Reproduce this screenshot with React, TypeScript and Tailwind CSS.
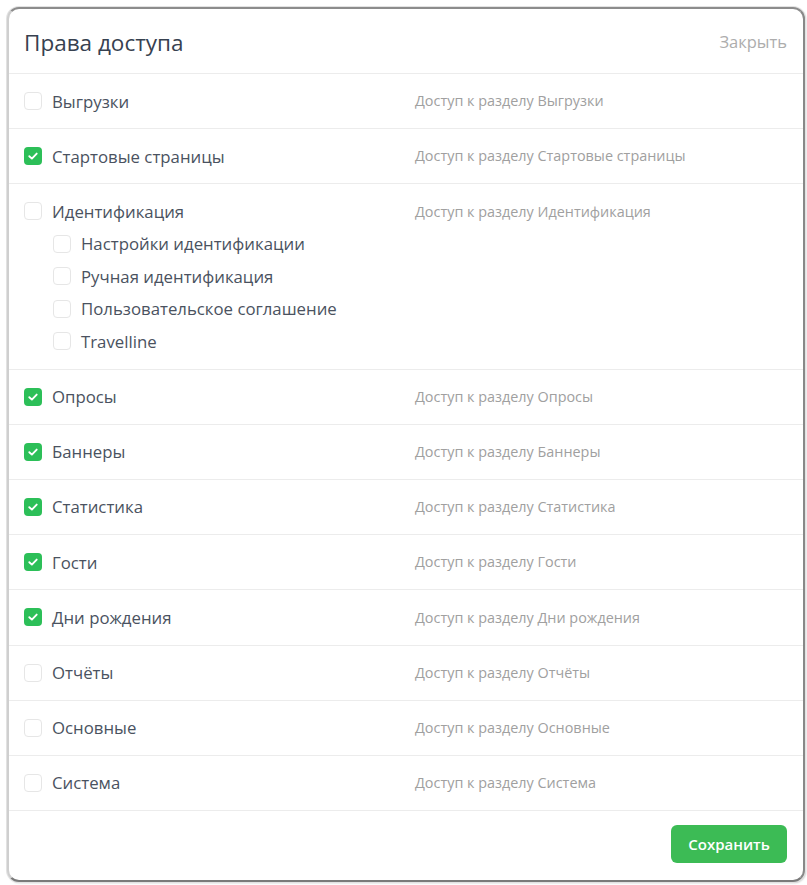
import React from "react";

type Item = { label: string; checked: boolean; children?: string[] };

const items: Item[] = [
  { label: "Выгрузки", checked: false },
  { label: "Стартовые страницы", checked: true },
  {
    label: "Идентификация",
    checked: false,
    children: [
      "Настройки идентификации",
      "Ручная идентификация",
      "Пользовательское соглашение",
      "Travelline",
    ],
  },
  { label: "Опросы", checked: true },
  { label: "Баннеры", checked: true },
  { label: "Статистика", checked: true },
  { label: "Гости", checked: true },
  { label: "Дни рождения", checked: true },
  { label: "Отчёты", checked: false },
  { label: "Основные", checked: false },
  { label: "Система", checked: false },
];

function Box({ checked }: { checked: boolean }) {
  if (checked) {
    return (
      <span className="flex h-[18px] w-[18px] shrink-0 items-center justify-center rounded-[4px] bg-[#2cbf58]">
        <svg width="12" height="12" viewBox="0 0 12 12" fill="none">
          <path d="M2.3 6.2 L4.9 8.6 L9.7 3.6" stroke="white" strokeWidth="1.9" strokeLinecap="round" strokeLinejoin="round" />
        </svg>
      </span>
    );
  }
  return <span className="h-[18px] w-[18px] shrink-0 rounded-[4px] border border-[#e6e6e6] bg-white" />;
}

export default function App() {
  return (
    <div className="h-[885px] w-[807px] bg-white p-[7px] pr-[2px] pb-[3px]" style={{ fontFamily: '"Open Sans", "Noto Sans", sans-serif' }}>
      <div className="flex h-full w-full flex-col overflow-hidden rounded-[12px] border-2 border-t-[#8c8c8c] border-r-[#888] border-b-[#7a7a7a] border-l-[#cfcfcf] bg-white shadow-[0_0_0_1px_#e2e2e2,1px_1px_2px_rgba(0,0,0,0.25)]">
        <div className="flex h-[65px] shrink-0 items-center justify-between border-b border-[#ececec] pl-[15px] pr-[16px] pt-[3px]">
          <span className="text-[22.5px] font-medium text-[#374150]">Права доступа</span>
          <span className="text-[16.5px] text-[#adadad]">Закрыть</span>
        </div>
        {items.map((it) => (
          <div key={it.label} className="flex shrink-0 border-b border-[#ececec] py-[17.1px] pl-[15px]">
            <div className="flex w-[391px] flex-col gap-[12.5px]">
              <div className="flex h-[20px] items-center gap-[10px]">
                <Box checked={it.checked} />
                <span className="text-[16.8px] text-[#4a5260]">{it.label}</span>
              </div>
              {it.children?.map((c) => (
                <div key={c} className="flex h-[20px] items-center gap-[10px] pl-[29px]">
                  <Box checked={false} />
                  <span className="text-[16.8px] text-[#4a5260]">{c}</span>
                </div>
              ))}
            </div>
            <div className="flex h-[20px] items-center text-[14.4px] text-[#a0a0a0]">
              Доступ к разделу {it.label}
            </div>
          </div>
        ))}
        <div className="flex flex-1 items-start justify-end pr-[16px] pt-[14px]">
          <button className="h-[38px] w-[116px] rounded-[6px] bg-[#3cbb55] text-[15px] font-semibold text-white">
            Сохранить
          </button>
        </div>
      </div>
    </div>
  );
}
